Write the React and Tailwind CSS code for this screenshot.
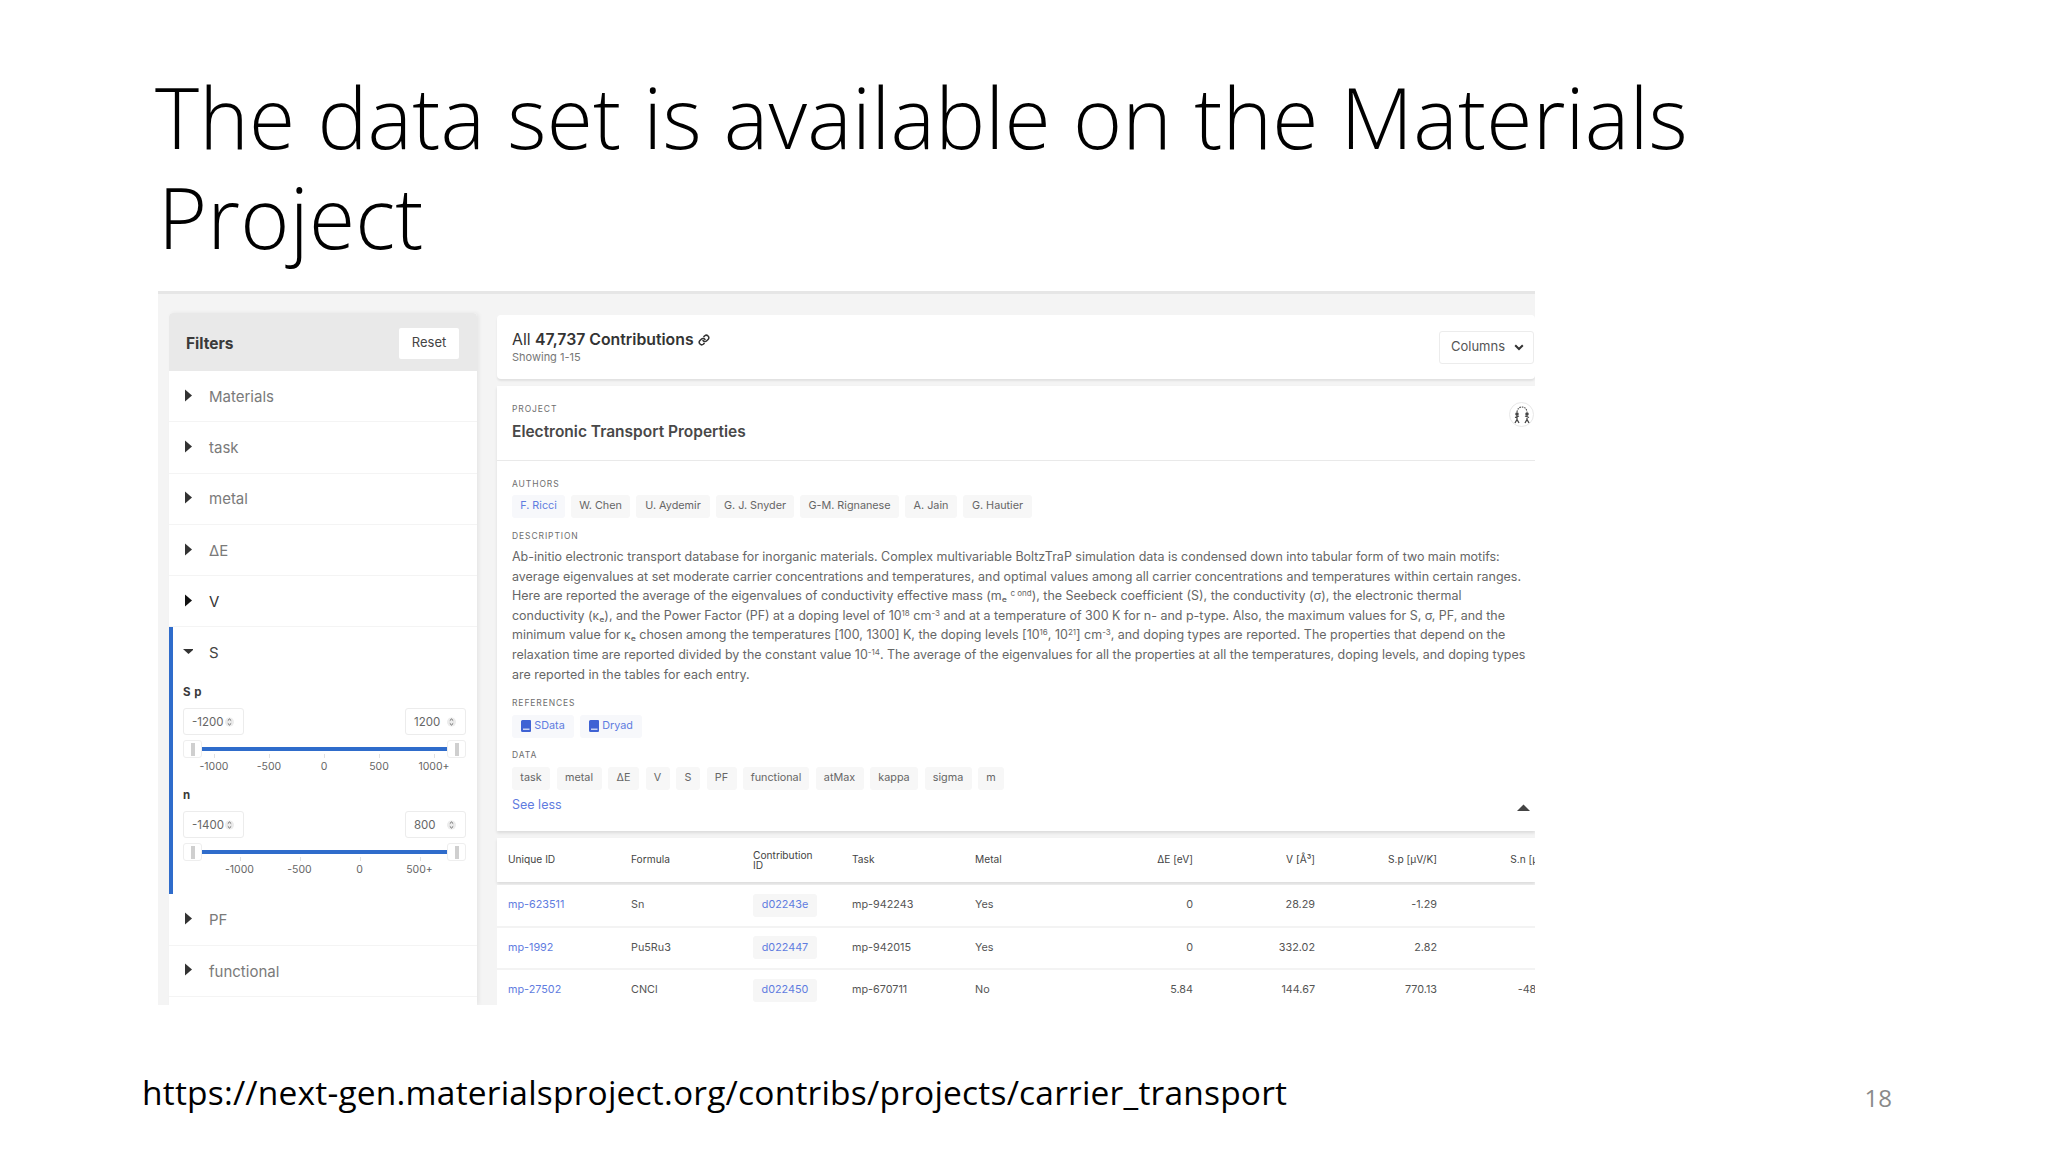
const Caret = ({ dark, open }) => (
  <svg width="10" height="13" viewBox="0 0 10 13" className="shrink-0 -mt-[2px]">
    {open ? <path d="M0 4H11L5.500 9Z" fill="#333" /> : <path d="M1 0.500L8 6.500L1 12.500Z" fill={dark ? "#111" : "#333"} />}
  </svg>
);

const FilterRow = ({ label, dark }) => (
  <div className="h-[51.3px] flex items-center pl-[15px] border-b border-[#f4f4f4]">
    <span className="w-[25px] flex"><Caret dark={dark} /></span>
    <span className={`text-[15px] mt-[2px] ${dark ? "text-[#333]" : "text-[#7a7a7a]"}`}>{label}</span>
  </div>
);

const Spin = () => (
  <svg width="9" height="12" viewBox="0 0 9 12" className="shrink-0">
    <circle cx="4.5" cy="6" r="4.5" fill="#ececec" />
    <path d="M2.8 4.6L4.5 3L6.2 4.6M2.8 7.4L4.5 9L6.2 7.4" stroke="#555" strokeWidth="0.9" fill="none" />
  </svg>
);

const NumBox = ({ v }) => (
  <div className="w-[61px] h-[27px] bg-white border border-[#ececec] rounded-[3px] flex items-center justify-between pl-[8px] pr-[9px] pt-[1px] text-[11.5px] text-[#666]">
    <span>{v}</span>
    <Spin />
  </div>
);

const Handle = () => (
  <div className="w-[19px] h-[18px] bg-white border border-[#eee] rounded-[3px] flex items-center justify-center">
    <div className="w-[4px] h-[13px] bg-[#cfcfcf]" />
  </div>
);

const Range = ({ title, lo, hi, labels, labelW, labelOff }) => (
  <div className="w-[283px]">
    <div className="h-[16px] leading-[16px] text-[11.5px] font-bold text-[#3a3a3a] tracking-[0.5px]">{title}</div>
    <div className="mt-[8px] flex justify-between">
      <NumBox v={lo} />
      <NumBox v={hi} />
    </div>
    <div className="mt-[5px] flex items-center">
      <Handle />
      <div className="flex-1 h-[4px] bg-[#2f6ccb]" />
      <Handle />
    </div>
    <div className={`mt-[2px] h-[14px] flex ${labelOff}`}>
      {labels.map((l) => (
        <div key={l} className={`relative ${labelW} text-center text-[10.5px] leading-[14px] text-[#666]`}>
          <span className="absolute left-1/2 -top-[6px] w-px h-[4px] bg-[#e2e2e2]" />
          {l}
        </div>
      ))}
    </div>
  </div>
);

const Label = ({ children, className = "" }) => (
  <div className={`h-[12px] leading-[12px] text-[8.5px] tracking-[0.9px] text-[#6e6e6e] ${className}`}>{children}</div>
);

const Chip = ({ children, w, blue, tint }) => (
  <span className={`h-[23px] rounded-[3px] flex items-center justify-center gap-[3px] text-[10.8px] ${w} ${tint ? "bg-[#f7f8fb]" : "bg-[#f7f7f7]"} ${blue ? "text-[#5f7ce0]" : "text-[#666]"}`}>
    {children}
  </span>
);

const Book = () => (
  <svg width="10" height="12" viewBox="0 0 10 12" className="shrink-0">
    <path d="M1.5 0H9a1 1 0 0 1 1 1v10a1 1 0 0 1-1 1H1.5A1.5 1.5 0 0 1 0 10.5v-9A1.5 1.5 0 0 1 1.5 0Z" fill="#3f62d4" />
    <rect x="2" y="8.6" width="6.5" height="1.2" fill="#e8edfb" />
  </svg>
);

const Sup = ({ children }) => <sup className="text-[8px]">{children}</sup>;

const cols = "grid grid-cols-[123px_122px_99px_123px_100px_118px_122px_122px_122px] pl-[11px] items-center";
const rows = [
  ["mp-623511", "Sn", "d02243e", "mp-942243", "Yes", "0", "28.29", "-1.29", ""],
  ["mp-1992", "Pu5Ru3", "d022447", "mp-942015", "Yes", "0", "332.02", "2.82", ""],
  ["mp-27502", "CNCl", "d022450", "mp-670711", "No", "5.84", "144.67", "770.13", "-484.55"],
];

export default function App() {
  return (
    <div className="w-[2048px] h-[1152px] bg-white overflow-hidden flex flex-col [font-family:'Open_Sans',sans-serif]">
      <h1 className="pt-[67px] pl-[155px] h-[291px] shrink-0 text-[84px] leading-[100px] font-light text-[#000] tracking-[0.2px] whitespace-nowrap">
        The data set is available on the Materials
        <br />
        <span className="pl-[3px]">Project</span>
      </h1>

      <div className="ml-[158px] w-[1377px] h-[714px] shrink-0 bg-[#f4f4f4] border-t-[3px] border-[#e6e6e6] overflow-hidden flex [font-family:Inter,sans-serif]">
        <aside className="ml-[11px] mt-[19px] w-[308px] shrink-0 bg-white shadow-[2px_0_4px_rgba(0,0,0,0.06)] rounded-t-[4px]">
          <div className="h-[58px] bg-[#e9e9e9] rounded-t-[4px] flex items-center justify-between pl-[17px] pr-[18px]">
            <span className="text-[15.5px] font-bold text-[#3a3a3a] mt-[4px]">Filters</span>
            <span className="w-[60px] h-[31px] mt-[2px] bg-white rounded-[2px] flex items-center justify-center text-[13px] text-[#444]">Reset</span>
          </div>
          <FilterRow label="Materials" />
          <FilterRow label="task" />
          <FilterRow label="metal" />
          <FilterRow label="ΔE" />
          <FilterRow label="V" dark />
          <div className="border-l-[4px] border-[#2f6ccb] h-[267px]">
            <div className="h-[51px] flex items-center pl-[10px]">
              <span className="w-[26px] flex"><Caret open /></span>
              <span className="text-[15px] text-[#444] mt-[1px]">S</span>
            </div>
            <div className="pl-[10px] pt-[6px]">
              <Range title="S p" lo="-1200" hi="1200" labels={["-1000", "-500", "0", "500", "1000+"]} labelW="w-[55px]" labelOff="pl-[3.5px]" />
              <div className="mt-[13px]">
                <Range title="n" lo="-1400" hi="800" labels={["-1000", "-500", "0", "500+"]} labelW="w-[60px]" labelOff="pl-[26.5px]" />
              </div>
            </div>
          </div>
          <FilterRow label="PF" />
          <FilterRow label="functional" />
        </aside>

        <main className="ml-[20px] mt-[21px] flex-1 min-w-0">
          <div className="h-[64px] bg-white rounded-[4px] shadow-[0_2px_2px_rgba(0,0,0,0.08)] flex items-center justify-between pl-[15px] pr-[1px]">
            <div>
              <div className="h-[20px] leading-[20px] text-[15.8px] text-[#333] flex items-center gap-[4px] -mt-[1px]">
                <span>All <b className="font-semibold">47,737 Contributions</b></span>
                <svg width="12" height="12" viewBox="0 0 24 24" fill="none" stroke="#333" strokeWidth="3" strokeLinecap="round">
                  <path d="M10 13a5 5 0 0 0 7.5.5l3-3a5 5 0 0 0-7-7l-1.7 1.7" />
                  <path d="M14 11a5 5 0 0 0-7.5-.5l-3 3a5 5 0 0 0 7 7l1.7-1.7" />
                </svg>
              </div>
              <div className="h-[14px] leading-[14px] text-[11px] text-[#777]">Showing 1-15</div>
            </div>
            <div className="w-[95px] h-[33px] border border-[#ececec] rounded-[3px] flex items-center justify-center gap-[9px] pl-[2px] text-[13px] text-[#555]">
              Columns
              <svg width="10" height="7" viewBox="0 0 10 7"><path d="M1.2 1.2L5 5L8.8 1.2" stroke="#333" strokeWidth="2" fill="none" /></svg>
            </div>
          </div>

          <section className="relative mt-[7px] h-[445px] bg-white shadow-[0_2px_3px_rgba(0,0,0,0.1)]">
            <div className="h-[75px] border-b border-[#e9e9e9] pl-[15px] pt-[17px]">
              <Label>PROJECT</Label>
              <div className="mt-[7px] h-[20px] leading-[20px] text-[15.5px] font-semibold text-[#484848]">Electronic Transport Properties</div>
            </div>
            <div className="absolute right-[1px] top-[16px] w-[25px] h-[25px] rounded-full border border-[#e8e8e8] flex items-center justify-center">
              <svg width="16" height="18" viewBox="0 0 16 18" fill="none" stroke="#444" strokeWidth="1.1">
                <path d="M3 6C3.500 2.500 5.500 1 8 1s4.500 1.500 5 5" strokeDasharray="1.5 1" />
                <circle cx="3" cy="8" r="1.200" fill="#444" />
                <circle cx="13" cy="8" r="1.200" fill="#444" />
                <path d="M3 9.500V13.500M1 17l2-3.500 2 3.500M1 11.500l4-1.500M13 9.500V13.500M11 17l2-3.500 2 3.500M15 11.500l-4-1.500" strokeWidth="1.300" />
              </svg>
            </div>

            <div className="pl-[15px]">
              <Label className="mt-[17px]">AUTHORS</Label>
              <div className="mt-[5px] flex gap-[6px]">
                <Chip w="w-[53px]" blue tint>F. Ricci</Chip>
                <Chip w="w-[59px]">W. Chen</Chip>
                <Chip w="w-[74px]">U. Aydemir</Chip>
                <Chip w="w-[78px]">G. J. Snyder</Chip>
                <Chip w="w-[99px]">G-M. Rignanese</Chip>
                <Chip w="w-[52px]">A. Jain</Chip>
                <Chip w="w-[69px]">G. Hautier</Chip>
              </div>

              <Label className="mt-[12px]">DESCRIPTION</Label>
              <div className="mt-[5px] text-[12.48px] leading-[19.6px] text-[#666] whitespace-nowrap">
                <div>Ab-initio electronic transport database for inorganic materials. Complex multivariable BoltzTraP simulation data is condensed down into tabular form of two main motifs:</div>
                <div>average eigenvalues at set moderate carrier concentrations and temperatures, and optimal values among all carrier concentrations and temperatures within certain ranges.</div>
                <div>Here are reported the average of the eigenvalues of conductivity effective mass (mₑ <Sup>c ond</Sup>), the Seebeck coefficient (S), the conductivity (σ), the electronic thermal</div>
                <div>conductivity (κₑ), and the Power Factor (PF) at a doping level of 10<Sup>18</Sup> cm<Sup>-3</Sup> and at a temperature of 300 K for n- and p-type. Also, the maximum values for S, σ, PF, and the</div>
                <div>minimum value for κₑ chosen among the temperatures [100, 1300] K, the doping levels [10<Sup>16</Sup>, 10<Sup>21</Sup>] cm<Sup>-3</Sup>, and doping types are reported. The properties that depend on the</div>
                <div>relaxation time are reported divided by the constant value 10<Sup>-14</Sup>. The average of the eigenvalues for all the properties at all the temperatures, doping levels, and doping types</div>
                <div>are reported in the tables for each entry.</div>
              </div>

              <Label className="mt-[12.6px]">REFERENCES</Label>
              <div className="mt-[6px] flex gap-[6px]">
                <Chip w="w-[62px]" blue tint><Book />SData</Chip>
                <Chip w="w-[62px]" blue tint><Book />Dryad</Chip>
              </div>

              <Label className="mt-[11px]">DATA</Label>
              <div className="mt-[6px] flex gap-[6.500px]">
                <Chip w="w-[38px]">task</Chip>
                <Chip w="w-[45px]">metal</Chip>
                <Chip w="w-[31px]">ΔE</Chip>
                <Chip w="w-[24px]">V</Chip>
                <Chip w="w-[24px]">S</Chip>
                <Chip w="w-[30px]">PF</Chip>
                <Chip w="w-[66px]">functional</Chip>
                <Chip w="w-[48px]">atMax</Chip>
                <Chip w="w-[48px]">kappa</Chip>
                <Chip w="w-[47px]">sigma</Chip>
                <Chip w="w-[26px]">m</Chip>
              </div>
              <div className="mt-[7px] h-[16px] leading-[16px] text-[12.5px] text-[#5f7ce0]">See less</div>
            </div>
            <svg width="13" height="8" viewBox="0 0 13 8" className="absolute right-[5px] bottom-[19px]"><path d="M0 7L6.500 0.500L13 7Z" fill="#444" /></svg>
          </section>

          <div className={`mt-[7px] h-[44px] bg-white shadow-[0_2px_3px_rgba(0,0,0,0.1)] text-[10.2px] text-[#444] ${cols}`}>
            <div>Unique ID</div>
            <div>Formula</div>
            <div className="leading-[10px] w-[70px]">Contribution ID</div>
            <div>Task</div>
            <div>Metal</div>
            <div className="text-right">ΔE [eV]</div>
            <div className="text-right">V [Å³]</div>
            <div className="text-right">S.p [μV/K]</div>
            <div className="text-right whitespace-nowrap">S.n [μV/K]</div>
          </div>
          <div className="mt-[3px]">
            {rows.map((r) => (
              <div key={r[0]} className={`h-[42.5px] bg-white border-b-2 border-[#f3f3f3] text-[10.8px] text-[#555] ${cols}`}>
                <div className="text-[#5f7ce0]">{r[0]}</div>
                <div>{r[1]}</div>
                <div><span className="inline-flex items-center justify-center w-[64px] h-[23px] bg-[#f6f6f6] rounded-[3px] text-[#5f7ce0]">{r[2]}</span></div>
                <div>{r[3]}</div>
                <div>{r[4]}</div>
                <div className="text-right">{r[5]}</div>
                <div className="text-right">{r[6]}</div>
                <div className="text-right">{r[7]}</div>
                <div className="text-right">{r[8]}</div>
              </div>
            ))}
          </div>
        </main>
      </div>

      <footer className="pt-[65px] pl-[142px] pr-[156px] flex justify-between items-start">
        <span className="h-[44px] leading-[44px] text-[33.5px] tracking-[0.2px] text-[#000] whitespace-nowrap">https://next-gen.materialsproject.org/contribs/projects/carrier_transport</span>
        <span className="h-[44px] leading-[56px] text-[24px] text-[#8a8a8a]">18</span>
      </footer>
    </div>
  );
}
